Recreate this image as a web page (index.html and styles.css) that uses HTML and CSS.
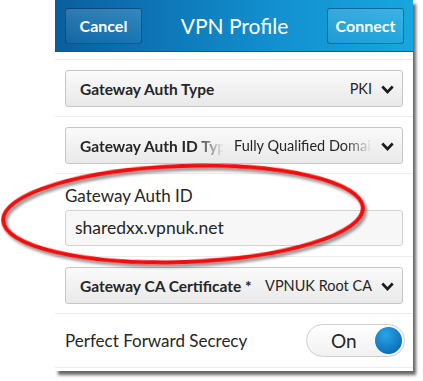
FILE: index.html
```html
<!DOCTYPE html>
<html lang="en">
<head>
  <meta charset="UTF-8">
  <title>VPN Profile</title>
  <link rel="stylesheet" href="styles.css">
</head>
<body>
  <div class="screen">
    <div class="title-bar">
      <button class="bar-btn cancel">Cancel</button>
      <div class="title">VPN Profile</div>
      <button class="bar-btn connect">Connect</button>
    </div>

    <div class="row">
      <div class="dropdown">
        <span class="dd-label">Gateway Auth Type</span>
        <span class="dd-value">PKI</span>
        <svg class="chev" width="13" height="9" viewBox="0 0 13 9"><polyline points="1.3,1.5 6.5,7 11.7,1.5" fill="none" stroke="#1c1c1c" stroke-width="2.6"/></svg>
      </div>
    </div>

    <div class="row">
      <div class="dropdown">
        <span class="dd-label fade narrow">Gateway Auth ID Type</span>
        <span class="dd-value fade wide">Fully Qualified Domain Name</span>
        <svg class="chev" width="13" height="9" viewBox="0 0 13 9"><polyline points="1.3,1.5 6.5,7 11.7,1.5" fill="none" stroke="#1c1c1c" stroke-width="2.6"/></svg>
      </div>
    </div>

    <div class="row field-row">
      <label class="field-label">Gateway Auth ID</label>
      <div class="text-input">sharedxx.vpnuk.net</div>
    </div>

    <div class="row">
      <div class="dropdown">
        <span class="dd-label">Gateway CA Certificate *</span>
        <span class="dd-value">VPNUK Root CA</span>
        <svg class="chev" width="13" height="9" viewBox="0 0 13 9"><polyline points="1.3,1.5 6.5,7 11.7,1.5" fill="none" stroke="#1c1c1c" stroke-width="2.6"/></svg>
      </div>
    </div>

    <div class="row toggle-row">
      <span class="toggle-label">Perfect Forward Secrecy</span>
      <div class="toggle">
        <span class="toggle-text">On</span>
        <span class="knob"></span>
      </div>
    </div>
  </div>

  <!-- red annotation ring drawn over the screenshot -->
  <svg class="ring" width="423" height="381" viewBox="0 0 423 381">
    <defs>
      <filter id="shade" x="-10%" y="-20%" width="120%" height="140%">
        <feGaussianBlur in="SourceAlpha" stdDeviation="1.6"/>
        <feOffset dx="2" dy="3" result="off"/>
        <feComponentTransfer><feFuncA type="linear" slope="0.45"/></feComponentTransfer>
        <feMerge><feMergeNode/><feMergeNode in="SourceGraphic"/></feMerge>
      </filter>
    </defs>
    <ellipse cx="183" cy="214" rx="180" ry="48" transform="rotate(-2 183 214)" fill="none" stroke="#f20808" stroke-width="4" filter="url(#shade)"/>
  </svg>
</body>
</html>
```

FILE: styles.css
```css
* { box-sizing: border-box; margin: 0; padding: 0; }
body { background: #fff; font-family: Lato, "Open Sans", sans-serif; color: #262626; width: 423px; height: 381px; overflow: hidden; position: relative; }

.screen { margin-left: 55px; width: 358px; height: 371px; background: #fff; box-shadow: 3px 4px 3px rgba(0,0,0,0.6); }

.title-bar { height: 52px; display: flex; align-items: center; justify-content: space-between; padding: 0 9px 0 10px;
  background: linear-gradient(to right, #0a5e9f, #128fcf 60%, #17a6de); border-bottom: 1px solid #0b5b94; }
.title { color: #fff; font-size: 21px; line-height: 24px; }
.bar-btn { width: 77px; height: 36px; border-radius: 3px; color: #fff; font-family: inherit; font-weight: bold; font-size: 16px;
  border: 1px solid rgba(0,30,70,0.45); background: linear-gradient(rgba(255,255,255,0.16), rgba(255,255,255,0.04)); }

.row { border-bottom: 1px solid #ececec; padding: 10px 10px 9px; }
.title-bar + .row { margin-top: 7px; border-top: 1px solid #ececec; }

.dropdown { height: 37px; display: flex; align-items: center; padding: 0 8px 0 14px; border: 1px solid #c6c6c6; border-radius: 3px;
  background: linear-gradient(#fafafa, #e9e9e9); }
.dd-label { font-weight: bold; font-size: 15.5px; line-height: 20px; white-space: nowrap; flex: 1; }
.dd-value { font-size: 14.5px; line-height: 20px; white-space: nowrap; margin-right: 9px; }
.chev { flex: none; margin-top: 1px; }
.fade { overflow: hidden; -webkit-mask-image: linear-gradient(to right, #000 80%, transparent); mask-image: linear-gradient(to right, #000 80%, transparent); }
.narrow { flex: none; width: 144px; margin-right: 10px; }
.wide { flex: 1; }

.field-row { padding-top: 12px; padding-bottom: 10px; }
.field-label { display: block; font-size: 17px; line-height: 20px; margin-bottom: 4px; }
.text-input { height: 36px; border: 1px solid #d2d2d2; border-radius: 3px; background: #f7f7f7; font-size: 17.5px; line-height: 22px; padding: 6px 9px; }

.toggle-row { display: flex; align-items: center; justify-content: space-between; height: 54px; padding: 0 8px 0 10px; }
.toggle-label { font-size: 17px; }
.toggle { width: 99px; height: 33px; border: 1px solid #cfcfcf; border-radius: 17px; background: linear-gradient(#fff, #f1f1f1);
  display: flex; align-items: center; justify-content: space-between; padding: 0 2px 0 24px; }
.toggle-text { font-size: 19px; }
.knob { width: 27px; height: 27px; border-radius: 50%; background: radial-gradient(circle at 40% 30%, #2aa4e8, #0b6fb8 75%); }

.ring { position: absolute; left: 0; top: 0; pointer-events: none; }
```
